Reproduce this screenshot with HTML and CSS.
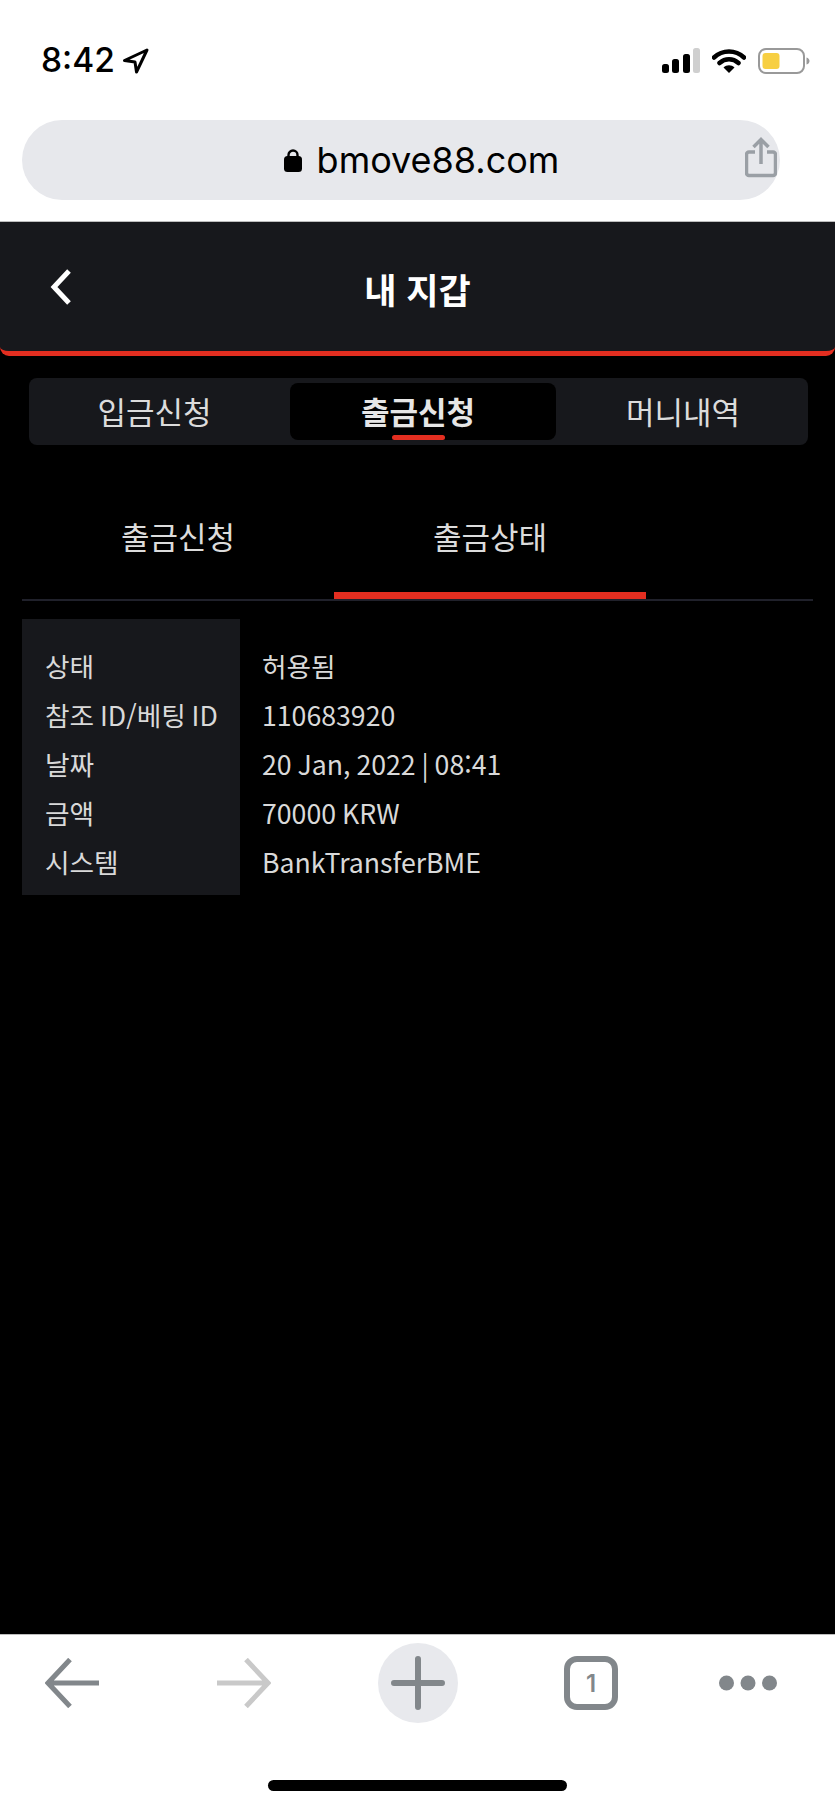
FILE: index.html
```html
<!DOCTYPE html>
<html lang="ko">
<head>
<meta charset="utf-8">
<title>내 지갑</title>
<link rel="stylesheet" href="styles.css">
</head>
<body>
<div class="phone">
  <div class="status">
    <div class="status-left">
      <span class="time">8:42</span>
      <svg class="loc" width="27" height="26" viewBox="0 0 27 26"><path d="M25 2 2.500 12.500 13 14l1.500 10z" fill="none" stroke="#000" stroke-width="3" stroke-linejoin="round"/></svg>
    </div>
    <div class="status-right">
      <svg width="38" height="25" viewBox="0 0 38 25"><rect x="0" y="16" width="7" height="9" rx="2.500" fill="#000"/><rect x="10" y="11" width="7" height="14" rx="2.500" fill="#000"/><rect x="21" y="6" width="7" height="19" rx="2.500" fill="#000"/><rect x="31" y="0" width="7" height="25" rx="2.500" fill="#cfcfcf"/></svg>
      <svg width="34" height="25" viewBox="0 0 34 25"><path d="M2 9.500C10.500 1.500 23.500 1.500 32 9.500M7.500 15C13 10 21 10 26.500 15" fill="none" stroke="#000" stroke-width="4.500" stroke-linecap="round"/><path d="M11.500 19.500C14.500 16.500 19.500 16.500 22.500 19.500L17 25z" fill="#000"/></svg>
      <svg width="52" height="26" viewBox="0 0 52 26"><rect x="1" y="1" width="45" height="24" rx="7" fill="#fff" stroke="#999" stroke-width="2"/><rect x="4.500" y="5" width="17" height="16" rx="3" fill="#f7cf42"/><path d="M48.500 9.500c2 .5 3 2 3 3.500s-1 3-3 3.500z" fill="#999"/></svg>
    </div>
  </div>
  <div class="url-bar">
    <div class="url-main">
      <svg width="18" height="24" viewBox="0 0 18 24"><path d="M4.500 11V7a4.500 4.500 0 0 1 9 0v4" fill="none" stroke="#000" stroke-width="2.400"/><rect x="0" y="8" width="18" height="16" rx="3.500" fill="#000"/></svg>
      <span class="url-text">bmove88.com</span>
    </div>
    <svg class="share" width="32" height="41" viewBox="0 0 32 41"><path d="M10 15H4a2.500 2.500 0 0 0-2.500 2.500V36A2.500 2.500 0 0 0 4 38.500h24a2.500 2.500 0 0 0 2.500-2.500V17.500A2.500 2.500 0 0 0 28 15h-6" fill="none" stroke="#9a9fa5" stroke-width="3.500"/><path d="M16 27V3M8.500 10 16 2.500 23.500 10" fill="none" stroke="#9a9fa5" stroke-width="3.500"/></svg>
  </div>
  <main class="page">
    <header class="head">
      <svg class="chevron" width="22" height="36" viewBox="0 0 22 36"><path d="M19 2 4 18l15 16" fill="none" stroke="#fff" stroke-width="5"/></svg>
      <h1 class="title">내 지갑</h1>
    </header>
    <nav class="tabs">
      <div class="tab tab-first">입금신청</div>
      <div class="tab tab-active">출금신청<span class="tab-mark"></span></div>
      <div class="tab tab-last">머니내역</div>
    </nav>
    <div class="subtabs">
      <div class="subtab">출금신청</div>
      <div class="subtab subtab-active">출금상태</div>
    </div>
    <div class="detail">
      <div class="labels">
        <div class="row">상태</div>
        <div class="row">참조 ID/베팅 ID</div>
        <div class="row">날짜</div>
        <div class="row">금액</div>
        <div class="row">시스템</div>
      </div>
      <div class="values">
        <div class="row">허용됨</div>
        <div class="row">110683920</div>
        <div class="row">20 Jan, 2022 | 08:41</div>
        <div class="row">70000 KRW</div>
        <div class="row">BankTransferBME</div>
      </div>
    </div>
  </main>
  <footer class="toolbar">
    <div class="tools">
      <svg width="54" height="50" viewBox="0 0 54 50"><path d="M54 25H3M25 1.500 3 25l22 23.500" fill="none" stroke="#82878b" stroke-width="5"/></svg>
      <svg class="tool-forward" width="54" height="50" viewBox="0 0 54 50"><path d="M0 25h51M29 1.500 51 25 29 48.500" fill="none" stroke="#c9c9c9" stroke-width="5"/></svg>
      <div class="plus-wrap">
        <svg width="54" height="54" viewBox="0 0 54 54"><path d="M27 3v48M3 27h48" fill="none" stroke="#82878b" stroke-width="6" stroke-linecap="round"/></svg>
      </div>
      <div class="tab-count">1</div>
      <svg class="tool-more" width="58" height="16" viewBox="0 0 58 16"><circle cx="7.500" cy="8" r="7.500" fill="#82878b"/><circle cx="29" cy="8" r="7.500" fill="#82878b"/><circle cx="50.500" cy="8" r="7.500" fill="#82878b"/></svg>
    </div>
    <div class="home"></div>
  </footer>
</div>
</body>
</html>
```
FILE: styles.css
```css
* { box-sizing: border-box; }
html, body { margin: 0; padding: 0; background: #fff; }
body { font-family: "Noto Sans CJK KR", "Noto Sans", sans-serif; }
.phone { width: 835px; height: 1808px; display: flex; flex-direction: column; overflow: hidden; }

.status { height: 120px; padding: 48px 25px 0 41px; display: flex; justify-content: space-between; align-items: flex-start; }
.status-left { display: flex; align-items: center; gap: 7px; height: 25px; }
.time { font-family: Inter, sans-serif; font-size: 33.500px; font-weight: 550; line-height: 25px; color: #000; }
.status-right { display: flex; align-items: flex-start; gap: 12px; }

.url-bar { height: 80px; margin: 0 55px 0 22px; background: #e7e8ec; border-radius: 40px; display: flex; align-items: center; justify-content: center; position: relative; flex: none; }
.url-main { display: flex; align-items: center; gap: 15px; margin-left: 41px; }
.url-text { font-family: Inter, sans-serif; font-size: 36px; line-height: 44px; color: #000; }
.share { position: absolute; right: 3px; top: 17px; }

.page { margin-top: 21px; height: 1413px; flex: none; background: #000; border-top: 1px solid #bdbdbd; }
.head { height: 134px; background: #17181c; border-bottom: 5px solid #e32e20; border-radius: 0 0 9px 9px; display: flex; align-items: center; justify-content: center; position: relative; }
.chevron { position: absolute; left: 50px; top: 47px; }
.title { margin: 0; font-size: 35px; font-weight: 700; line-height: 46px; color: #fff; position: relative; top: 2px; }

.tabs { margin: 22px 27px 0 29px; height: 67px; padding: 5px 5px 5px 0; background: #17181c; border-radius: 8px; display: grid; grid-template-columns: 261px 266px 1fr; }
.tab { display: flex; align-items: center; justify-content: center; font-size: 31px; line-height: 40px; color: #dcdcdc; position: relative; padding-bottom: 1px; }
.tab-first { padding-right: 10px; }
.tab-active { padding-right: 10px; background: #000; border-radius: 8px; font-weight: 700; color: #e6e6e6; }
.tab-last { padding-left: 7px; }
.tab-mark { position: absolute; left: 102px; bottom: 0; width: 53px; height: 5px; background: #e32e20; border-radius: 3px; }

.subtabs { margin: 0 22px; height: 156px; border-bottom: 2px solid #20212b; display: flex; align-items: flex-start; }
.subtab { width: 312px; height: 154px; padding-top: 71px; text-align: center; font-size: 31px; line-height: 40px; color: #dcdcdc; }
.subtab-active { border-bottom: 7px solid #e32e20; }

.detail { margin: 18px 22px 0; display: flex; font-size: 26.700px; word-spacing: -1.600px; color: #d9d9d9; }
.labels { width: 218px; height: 276px; padding: 22px 0 0 23px; background: #17181c; }
.values { padding: 22px 0 0 22px; }
.row { height: 49px; line-height: 49px; white-space: nowrap; }

.toolbar { flex: 1; background: #fff; border-top: 1px solid #bdbdbd; position: relative; }
.tools { height: 80px; margin-top: 8px; padding-left: 45px; display: flex; align-items: center; }
.tool-forward { margin-left: 118px; }
.plus-wrap { margin-left: 107px; width: 80px; height: 80px; border-radius: 50%; background: #e8e9ed; display: flex; align-items: center; justify-content: center; }
.tab-count { margin-left: 106px; width: 54px; height: 54px; border: 6px solid #82878b; border-radius: 13px; display: flex; align-items: center; justify-content: center; font-family: Inter, sans-serif; font-size: 24px; font-weight: 600; color: #82878b; }
.tool-more { margin-left: 101px; }
.home { position: absolute; left: 268px; top: 145px; width: 299px; height: 11px; border-radius: 6px; background: #000; }
```
